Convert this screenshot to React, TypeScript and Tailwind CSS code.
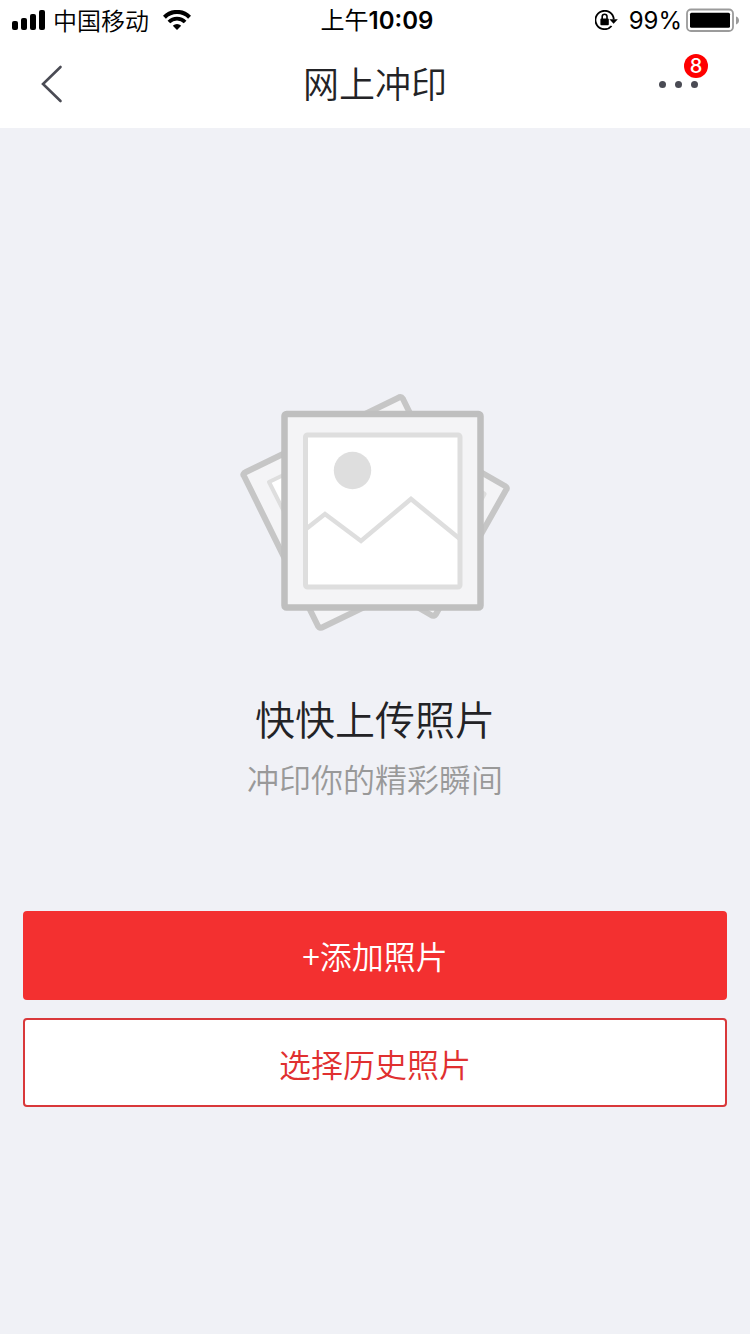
const signalBars = ['h-[9px]', 'h-3', 'h-4', 'h-5']

function WifiIcon() {
	return (
		<svg className="h-5 w-7" viewBox="0 0 28 20" fill="none" aria-hidden="true">
			<path d="M1.4 7.2A17.8 17.8 0 0 1 26.6 7.2" stroke="#000" strokeWidth="4.2" />
			<path d="M5.9 12A11.4 11.4 0 0 1 22.1 12" stroke="#000" strokeWidth="3.8" />
			<path d="M14 20l-4.2-4.3a6 6 0 0 1 8.4 0z" fill="#000" />
		</svg>
	)
}

function RotationLockIcon() {
	return (
		<svg className="h-5 w-6" viewBox="0 0 24 20" fill="none" aria-hidden="true">
			<path d="M18.8 9.4A9.2 9.2 0 1 0 16.6 16" stroke="#000" strokeWidth="1.8" />
			<path d="M14.4 9.2h8.4l-4.2 4.6z" fill="#000" />
			<rect x="5.4" y="8.4" width="8.4" height="6.8" rx="1" fill="#000" />
			<path d="M7.2 9V6.6a2.4 2.4 0 0 1 4.8 0V9" stroke="#000" strokeWidth="1.6" />
		</svg>
	)
}

function BatteryIcon() {
	return (
		<svg className="h-6 w-[54px]" viewBox="0 0 54 24" aria-hidden="true">
			<rect x="1" y="1.5" width="46" height="21.5" rx="4" fill="none" stroke="#9b9b9b" strokeWidth="1.8" />
			<rect x="4" y="4.8" width="40" height="15" rx="1.5" fill="#000" />
			<path d="M50 8.5v8c2-.6 3-2.2 3-4s-1-3.4-3-4z" fill="#9b9b9b" />
		</svg>
	)
}

function StatusBar() {
	return (
		<div className="grid h-10 grid-cols-[1fr_auto_1fr] items-center pr-[10px] pl-3 text-2xl text-black">
			<div className="flex items-center">
				<div className="flex items-end gap-[3px]">
					{signalBars.map((h) => (
						<span key={h} className={`w-[6px] rounded-[2px] bg-black ${h}`} />
					))}
				</div>
				<span className="ml-2 font-[350]">中国移动</span>
				<span className="ml-[14px]">
					<WifiIcon />
				</span>
			</div>
			<time className="pl-[2px]">
				上午<span className="font-['Inter',sans-serif] font-semibold">10:09</span>
			</time>
			<div className="flex items-center justify-end">
				<RotationLockIcon />
				<div className="mr-1 ml-[10px]">
					<span className="font-['Inter',sans-serif]">99%</span>
				</div>
				<BatteryIcon />
			</div>
		</div>
	)
}

function NavBar() {
	return (
		<header className="grid h-22 grid-cols-[1fr_auto_1fr] items-center px-10">
			<button type="button" aria-label="返回" className="h-10 w-6">
				<svg className="h-10 w-6" viewBox="0 0 24 40" fill="none">
					<path d="M20.5 3L3 20l17.5 17" stroke="#4a4b54" strokeWidth="2.6" strokeLinecap="round" />
				</svg>
			</button>
			<h1 className="pb-1 text-4xl font-[350] text-[#232326]">网上冲印</h1>
			<button type="button" aria-label="更多" className="relative flex h-10 items-center gap-[9px] justify-self-end pr-3">
				<span className="size-[7px] rounded-full bg-[#4a4b54]" />
				<span className="size-[7px] rounded-full bg-[#4a4b54]" />
				<span className="size-[7px] rounded-full bg-[#4a4b54]" />
				<span className="absolute -top-[10px] right-[2px] flex size-6 items-center justify-center rounded-full bg-[#ff0000] font-['Inter',sans-serif] text-xl font-medium text-white">
					8
				</span>
			</button>
		</header>
	)
}

function PhotoStack() {
	return (
		<svg className="h-60 w-68" viewBox="239 392 272 240" strokeLinejoin="round" aria-hidden="true">
			{/* right photo */}
			<path d="M505 486Q508 488 506 490L436 614Q434 617 431 615L305 542L378 413Z" fill="#f4f4f6" stroke="#c6c6c6" strokeWidth="6" />
			<path d="M484 494L428 594L328 537L384 437Z" fill="#fff" stroke="#dedede" strokeWidth="5" />
			{/* left photo */}
			<path d="M246 472L398 398Q401 396 403 399L478 552L323 627Q320 629 318 626L244 476Q242 474 246 472Z" fill="#f4f4f6" stroke="#c6c6c6" strokeWidth="6" />
			<path d="M269 482L391 423L452 544L330 603Z" fill="#fff" stroke="#dedede" strokeWidth="4" />
			{/* front photo */}
			<rect x="284.5" y="414" width="196" height="193.5" rx="2" fill="#f4f4f6" stroke="#bfbfbf" strokeWidth="6.5" />
			<rect x="305.5" y="435" width="154.5" height="152" rx="2" fill="#fff" stroke="#dedede" strokeWidth="5" />
			<circle cx="352.5" cy="470.5" r="18.7" fill="#dedede" />
			<path d="M306 529L325 514L361 541L411 499L460 539" fill="none" stroke="#dedede" strokeWidth="4.5" strokeLinejoin="miter" />
		</svg>
	)
}

export default function App() {
	return (
		<div className="flex min-h-screen flex-col bg-[#f0f1f6] font-['Noto_Sans_CJK_SC',sans-serif]">
			<div className="bg-white">
				<StatusBar />
				<NavBar />
			</div>
			<main className="flex flex-col items-center px-[23px] pt-66 pb-10">
				<PhotoStack />
				<h2 className="mt-14 text-[40px] leading-[60px] font-[350] text-[#232326]">快快上传照片</h2>
				<p className="text-[32px] leading-[60px] font-[350] text-[#999]">冲印你的精彩瞬间</p>
				<div className="mt-[103px] flex w-full flex-col gap-[18px] text-[32px] font-[350]">
					<button type="button" className="h-[89px] rounded bg-[#f33030] pb-[2px] text-white">
						+添加照片
					</button>
					<button type="button" className="h-[89px] rounded border-2 border-[#d9383a] bg-white text-[#e03030]">
						选择历史照片
					</button>
				</div>
			</main>
		</div>
	)
}
